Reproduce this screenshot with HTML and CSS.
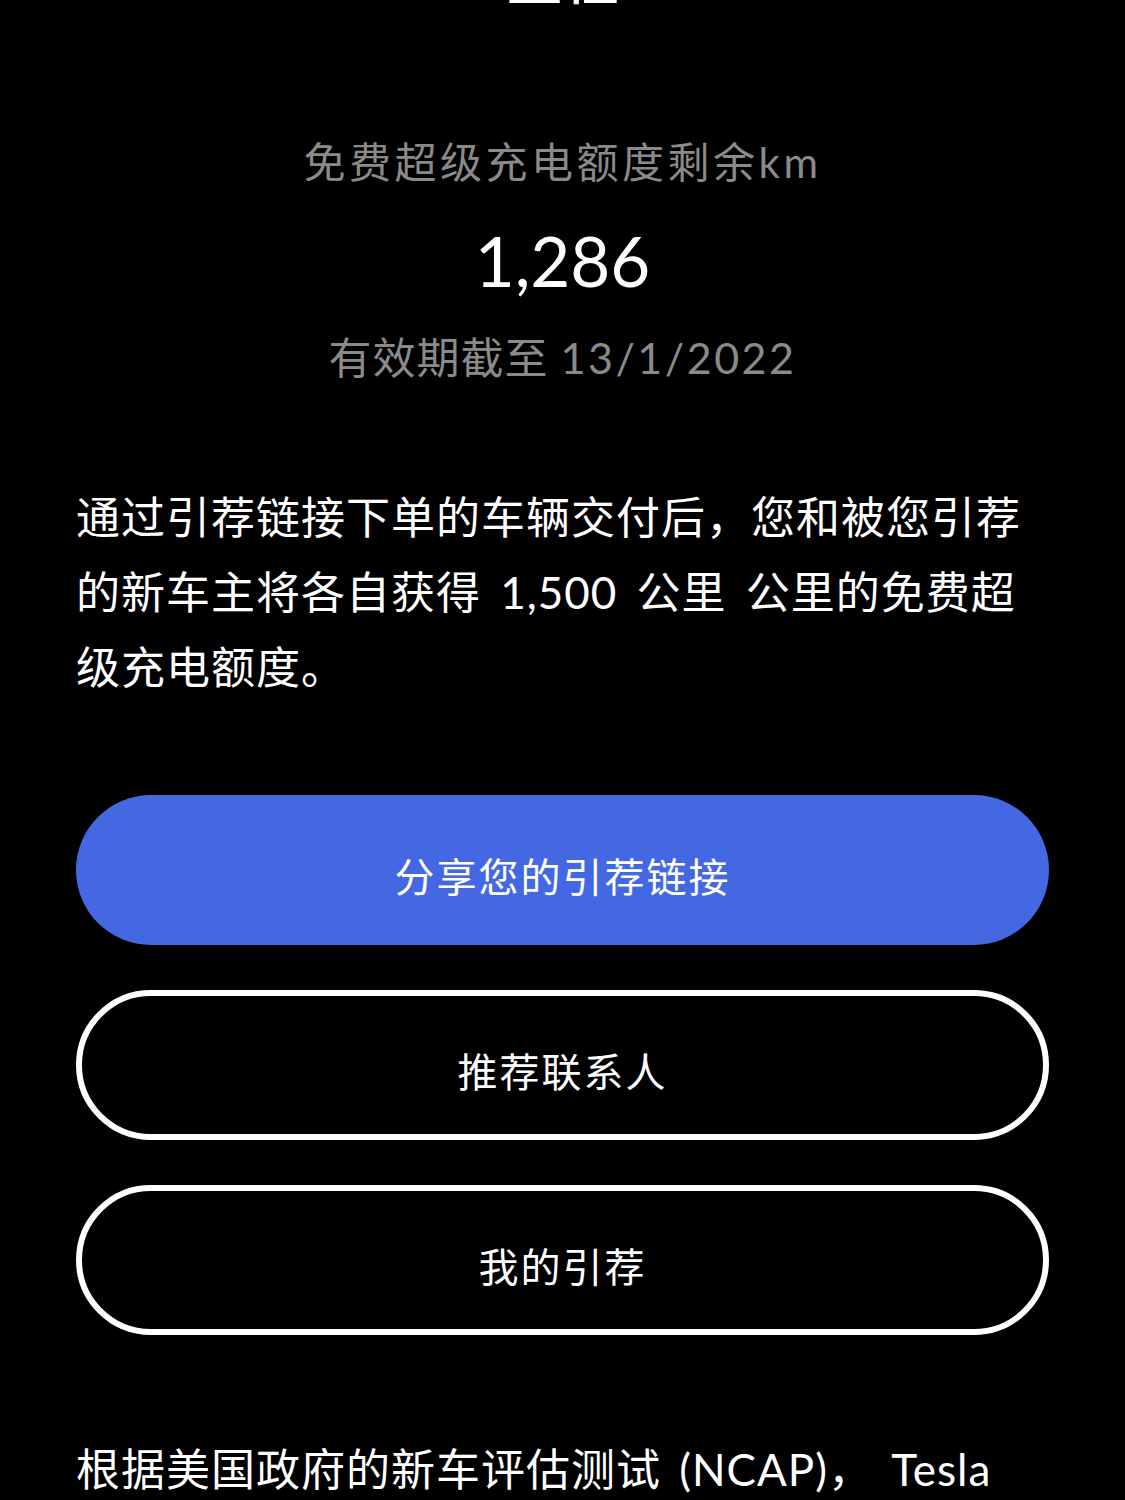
FILE: index.html
```html
<!DOCTYPE html>
<html lang="zh-CN">
<head>
    <meta charset="UTF-8">
    <meta name="viewport" content="width=device-width, initial-scale=1.0">
    <title>引荐</title>
    <link rel="stylesheet" href="styles.css">
</head>
<body>

<main class="page">
    <h1 class="page-title">里程</h1>

    <section class="credit">
        <p class="credit-label">免费超级充电额度剩余km</p>
        <p class="credit-value">1,286</p>
        <p class="credit-expiry">有效期截至 <span class="credit-date">13/1/2022</span></p>
    </section>

    <p class="intro">通过引荐链接下单的车辆交付后，您和被您引荐的新车主将各自获得 1,500 公里 公里的免费超级充电额度。</p>

    <div class="actions">
        <button class="btn btn-primary">分享您的引荐链接</button>
        <button class="btn btn-outline">推荐联系人</button>
        <button class="btn btn-outline">我的引荐</button>
    </div>

    <p class="note">根据美国政府的新车评估测试 (NCAP)， Tesla Model 3、Model S 和 Model X 在所有类别和子类别中均获得五星安全评级。</p>
</main>

</body>
</html>
```

FILE: styles.css
```css
html, body {
    margin: 0;
    padding: 0;
    background-color: #000;
}

body {
    color: #fff;
    font-family: "Lato", "Noto Sans CJK SC", sans-serif;
    overflow: hidden;
    height: 1500px;
}

.page {
    padding: 0 76px;
}

.page-title {
    margin: -52px 0 0 0;
    font-size: 56px;
    line-height: 60px;
    font-weight: 500;
    text-align: center;
}

.credit {
    margin-top: 124px;
    text-align: center;
}

.credit p {
    margin: 0;
}

.credit-label,
.credit-expiry {
    color: #8a8a8a;
    line-height: 60px;
}

.credit-label {
    font-size: 42px;
    letter-spacing: 3.5px;
}

.credit-expiry {
    font-size: 43px;
    letter-spacing: 1px;
}

.credit-date {
    letter-spacing: 2.5px;
}

.credit-value {
    font-size: 69px;
    line-height: 80px;
    padding: 29px 0 27px 0;
}

.intro {
    margin: 92px 0 0 0;
    font-size: 44px;
    line-height: 75px;
    letter-spacing: 1px;
    word-spacing: 7px;
}

.actions {
    display: flex;
    flex-direction: column;
    gap: 45px;
    margin-top: 90px;
}

.btn {
    height: 150px;
    border-radius: 75px;
    font-family: inherit;
    font-size: 40px;
    letter-spacing: 2px;
    color: #fff;
    cursor: pointer;
    padding: 10px 0 0 0;
}

.btn-primary {
    background-color: #4468e1;
    border: none;
}

.btn-outline {
    background-color: transparent;
    border: 6px solid #fff;
}

.note {
    margin: 97px 0 0 0;
    font-size: 44px;
    line-height: 75px;
    letter-spacing: 1px;
    word-spacing: 6px;
}
```
